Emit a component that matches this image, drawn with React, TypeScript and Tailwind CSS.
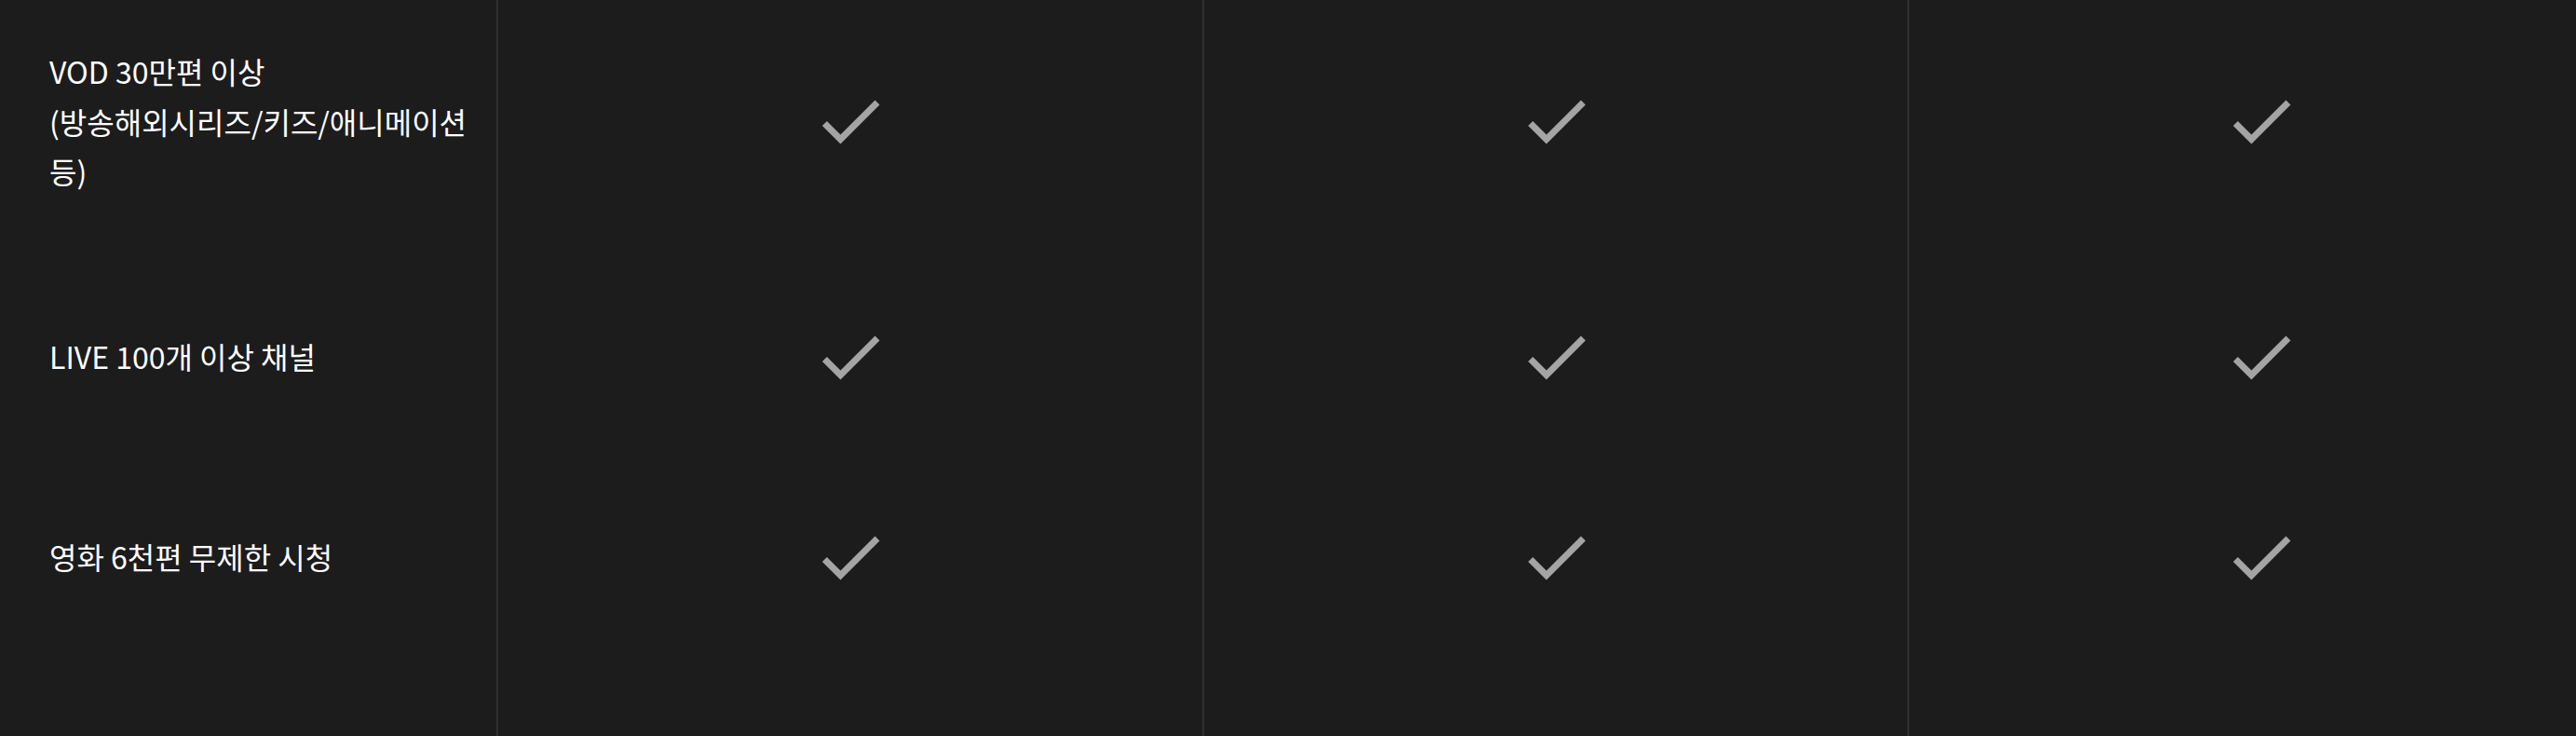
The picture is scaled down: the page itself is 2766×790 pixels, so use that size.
import { Fragment, type ReactNode } from "react"
import { MdCheck } from "react-icons/md"

const rows: { id: string; label: ReactNode; plans: boolean[] }[] = [
  {
    id: "vod",
    label: (
      <>
        VOD 30만편 이상
        <br />
        (방송해외시리즈/키즈/애니메이션 등)
      </>
    ),
    plans: [true, true, true],
  },
  { id: "live", label: "LIVE 100개 이상 채널", plans: [true, true, true] },
  { id: "movie", label: "영화 6천편 무제한 시청", plans: [true, true, true] },
]

export default function App() {
  return (
    <div className="h-[790px] w-[2766px] overflow-hidden bg-[#1c1c1c] font-['Noto_Sans_CJK_KR','Noto_Sans',sans-serif]">
      <div className="-mt-[15px] grid h-[806px] w-[2806px] grid-cols-[533px_758px_757px_758px] grid-rows-[auto_auto_auto_1fr]">
        {rows.map((row) => (
          <Fragment key={row.id}>
            <div className="flex min-h-[215px] items-center py-[65px] pl-[53px] pr-[10px]">
              <p className="text-[32px] leading-[53.5px] text-white">{row.label}</p>
            </div>
            {row.plans.map((on, i) => (
              <div key={i} className="flex min-h-[215px] items-center justify-center border-l-2 border-[#2f2f2f]">
                {on && <MdCheck className="h-[84px] w-[84px] text-[#a4a4a4]" />}
              </div>
            ))}
          </Fragment>
        ))}
        <div />
        <div className="border-l-2 border-[#2f2f2f]" />
        <div className="border-l-2 border-[#2f2f2f]" />
        <div className="border-l-2 border-[#2f2f2f]" />
      </div>
    </div>
  )
}
